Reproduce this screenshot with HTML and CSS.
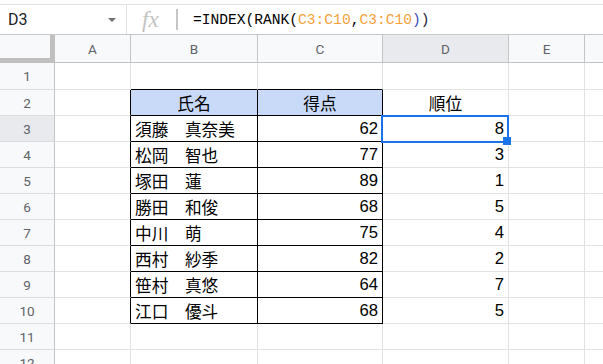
FILE: index.html
```html
<!DOCTYPE html>
<html lang="ja">
<head>
<meta charset="utf-8">
<link rel="stylesheet" href="styles.css">
</head>
<body>
<div class="topgap"></div>
<div class="fbar">
  <div class="namebox"><span class="ref">D3</span><span class="caret"></span></div>
  <div class="fx"><span class="fxg">fx</span><span class="vbar"></span></div>
  <div class="formula">=INDEX(RANK(<span class="rng">C3:C10</span>,<span class="rng">C3:C10</span><span class="p1">)</span><span class="p2">)</span></div>
</div>
<div class="sheet">
  <div class="corner"></div>
  <div class="ch">A</div><div class="ch">B</div><div class="ch">C</div><div class="ch sel">D</div><div class="ch">E</div><div class="ch last"></div>

  <div class="rh">1</div><div class="c"></div><div class="c bb"></div><div class="c bb"></div><div class="c"></div><div class="c"></div><div class="c last"></div>

  <div class="rh">2</div><div class="c br"></div><div class="c t hd ctr">氏名</div><div class="c t hd ctr">得点</div><div class="c ctr">順位</div><div class="c"></div><div class="c last"></div>

  <div class="rh sel">3</div><div class="c br"></div><div class="c t">須藤　真奈美</div><div class="c t num">62</div><div class="c num cur">8<span class="selbox"></span><span class="handle"></span></div><div class="c"></div><div class="c last"></div>

  <div class="rh">4</div><div class="c br"></div><div class="c t">松岡　智也</div><div class="c t num">77</div><div class="c num">3</div><div class="c"></div><div class="c last"></div>

  <div class="rh">5</div><div class="c br"></div><div class="c t">塚田　蓮</div><div class="c t num">89</div><div class="c num">1</div><div class="c"></div><div class="c last"></div>

  <div class="rh">6</div><div class="c br"></div><div class="c t">勝田　和俊</div><div class="c t num">68</div><div class="c num">5</div><div class="c"></div><div class="c last"></div>

  <div class="rh">7</div><div class="c br"></div><div class="c t">中川　萌</div><div class="c t num">75</div><div class="c num">4</div><div class="c"></div><div class="c last"></div>

  <div class="rh">8</div><div class="c br"></div><div class="c t">西村　紗季</div><div class="c t num">82</div><div class="c num">2</div><div class="c"></div><div class="c last"></div>

  <div class="rh">9</div><div class="c br"></div><div class="c t">笹村　真悠</div><div class="c t num">64</div><div class="c num">7</div><div class="c"></div><div class="c last"></div>

  <div class="rh">10</div><div class="c br"></div><div class="c t">江口　優斗</div><div class="c t num">68</div><div class="c num">5</div><div class="c"></div><div class="c last"></div>

  <div class="rh">11</div><div class="c"></div><div class="c"></div><div class="c"></div><div class="c"></div><div class="c"></div><div class="c last"></div>

  <div class="rh">12</div><div class="c"></div><div class="c"></div><div class="c"></div><div class="c"></div><div class="c"></div><div class="c last"></div>
</div>
</body>
</html>
```
FILE: styles.css
```css
* { box-sizing: border-box; }
html, body { margin: 0; padding: 0; background: #fff; }
body { width: 603px; height: 364px; overflow: hidden; font-family: "Liberation Sans", "Noto Sans CJK JP", sans-serif; }

.topgap { height: 5px; border-bottom: 1px solid #e0e0e0; }

.fbar { display: flex; height: 30px; border-bottom: 1px solid #c8c8c8; align-items: stretch; }
.namebox { width: 127px; border-right: 1px solid #e3e3e3; display: flex; align-items: center; justify-content: space-between; padding: 0 10px 0 8px; }
.ref { font-family: Roboto, "Liberation Sans", sans-serif; font-size: 16px; color: #202124; }
.caret { width: 0; height: 0; border-left: 4px solid transparent; border-right: 4px solid transparent; border-top: 4px solid #707070; }
.fx { width: 59px; display: flex; align-items: center; padding-left: 15px; gap: 17px; }
.fxg { font-family: "Liberation Serif", serif; font-style: italic; font-size: 23px; color: #c2c2c2; line-height: 1; }
.vbar { width: 2px; height: 21px; background: #c6c6c6; }
.formula { display: flex; align-items: center; padding-left: 7px; font-family: "Liberation Mono", monospace; font-size: 14.6px; color: #000; white-space: pre; }
.rng { color: #f6a13a; }
.p1 { color: #3d4eb8; }
.p2 { color: #1d1d3a; }

.sheet { display: grid; grid-template-columns: 55px 76px 127px 125px 126px 76px 18px; grid-template-rows: 28px 27px repeat(11, 26px); }

.corner { background: #f8f9fa; border-right: 5px solid #c0c0c0; border-bottom: 5px solid #c0c0c0; }
.ch { background: #f8f9fa; border-right: 1px solid #c4c4c4; border-bottom: 1px solid #c4c4c4; display: flex; align-items: center; justify-content: center; font-family: Roboto, "Liberation Sans", sans-serif; font-size: 13.5px; color: #5f6368; }
.ch.sel, .rh.sel { background: #e8eaed; }
.ch.last { border-right: none; }
.rh { background: #f8f9fa; border-right: 1px solid #c4c4c4; border-bottom: 1px solid #dcdcdc; display: flex; align-items: center; justify-content: center; font-family: Roboto, "Liberation Sans", sans-serif; font-size: 13.5px; color: #5f6368; }

.c { border-right: 1px solid #e2e2e2; border-bottom: 1px solid #e2e2e2; display: flex; align-items: center; padding: 0 4px; font-size: 16.67px; color: #000; white-space: nowrap; position: relative; }
.c.last { border-right: none; }
.c.bb { border-bottom-color: #000; }
.c.br { border-right-color: #000; }
.c.t { border-right-color: #000; border-bottom-color: #000; }
.c.hd { background: #c9daf8; }
.ctr { justify-content: center; }
.num { justify-content: flex-end; }
.c.cur { z-index: 5; }

.selbox { position: absolute; left: -2px; top: -1px; right: -1px; bottom: -2px; border: 2px solid #1a73e8; z-index: 5; }
.handle { position: absolute; left: 120px; top: 21px; width: 8px; height: 8px; background: #1a73e8; z-index: 6; }
```
